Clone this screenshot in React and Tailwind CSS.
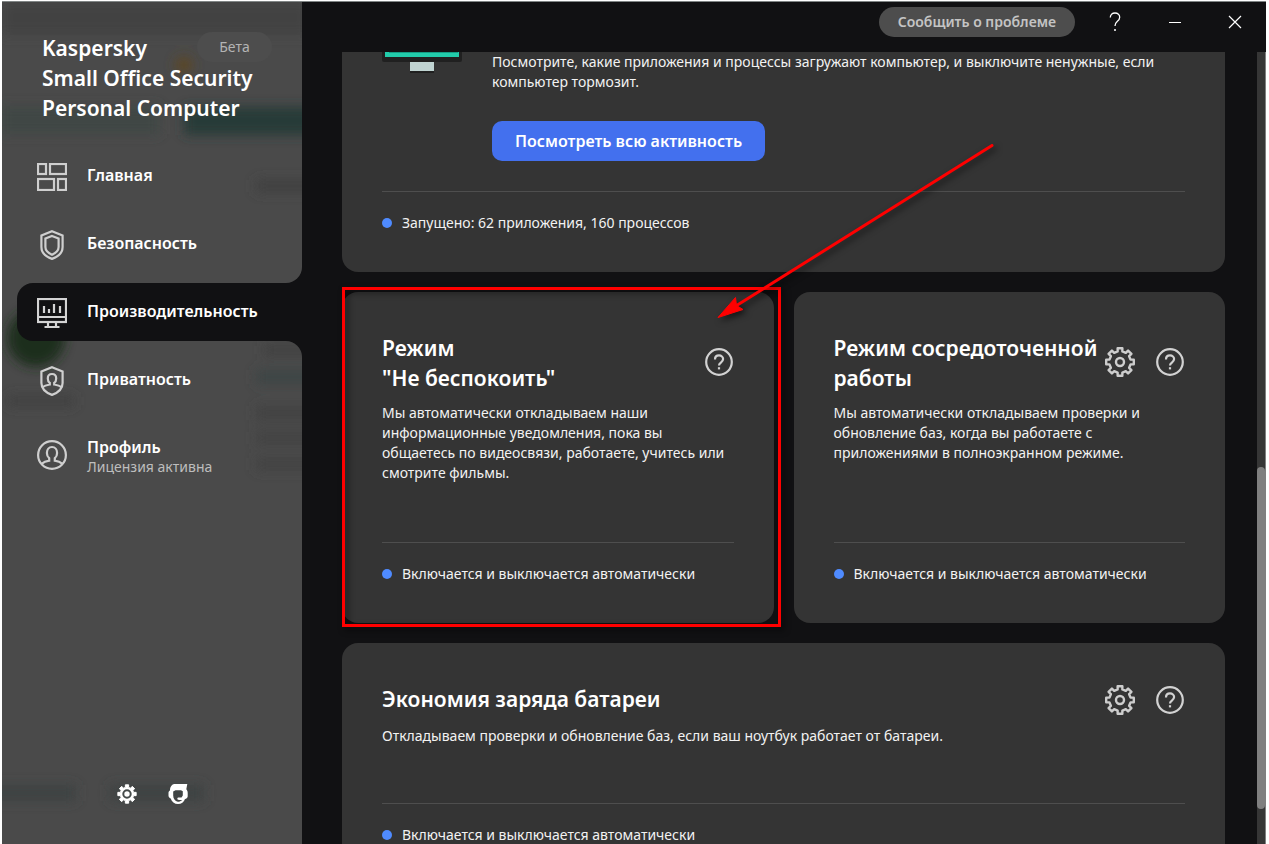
import React from "react";

function gearPath(c, outer, inner, teeth, topHalf, baseHalf) {
  const pts = [];
  for (let i = 0; i < teeth; i++) {
    const mid = (i * 2 * Math.PI) / teeth - Math.PI / 2;
    [
      [inner, -baseHalf],
      [outer, -topHalf],
      [outer, topHalf],
      [inner, baseHalf],
    ].forEach(([r, a]) => {
      pts.push(`${(c + r * Math.cos(mid + a)).toFixed(2)} ${(c + r * Math.sin(mid + a)).toFixed(2)}`);
    });
  }
  return `M${pts.join("L")}Z`;
}

const OUTLINE_GEAR = gearPath(16, 14, 10.8, 8, 0.17, 0.22);
const SOLID_GEAR = gearPath(10, 9.3, 6.8, 8, 0.18, 0.24);

function GearIcon() {
  return (
    <svg className="size-8" viewBox="0 0 32 32" fill="none" stroke="#cdcdcd" strokeWidth="2.4" strokeLinejoin="round" aria-hidden="true">
      <path d={OUTLINE_GEAR} />
      <circle cx="16" cy="16" r="4" />
    </svg>
  );
}

function HelpIcon() {
  return (
    <svg className="size-7" viewBox="0 0 28 28" fill="none" stroke="#d2d2d2" strokeWidth="2.2" aria-hidden="true">
      <circle cx="14" cy="14" r="12.8" />
      <path d="M10 11.400C10 9 11.700 7.400 14 7.400s4.100 1.600 4.100 3.700c0 1.700-1 2.600-2.200 3.500-1.200.9-1.900 1.500-1.900 3" />
      <path d="M14 19.200v2.200" />
    </svg>
  );
}

function HomeIcon() {
  return (
    <svg className="h-7 w-[30px]" viewBox="0 0 30 28" fill="none" stroke="#cfcfcf" strokeWidth="2.2" aria-hidden="true">
      <rect x="1" y="1" width="8" height="10" />
      <rect x="13" y="1" width="16" height="10" />
      <rect x="1" y="16" width="16" height="11" />
      <rect x="21" y="16" width="8" height="11" />
    </svg>
  );
}

function ShieldIcon() {
  return (
    <svg className="size-[30px]" viewBox="0 0 30 30" fill="none" stroke="#cfcfcf" strokeWidth="2.2" aria-hidden="true">
      <path d="M15 1.200 25.600 5.600V17c0 5.600-4.200 9.600-10.600 11.900C8.600 26.600 4.400 22.600 4.400 17V5.600Z" />
      <path d="M15 5.900 21.600 8.600V17c0 3.300-2.400 5.800-6.600 7.700-4.200-1.900-6.600-4.400-6.600-7.700V8.600Z" />
    </svg>
  );
}

function MonitorIcon() {
  return (
    <svg className="size-[30px]" viewBox="0 0 30 30" fill="none" stroke="#d4d4d4" strokeWidth="2.2" aria-hidden="true">
      <rect x="1" y="1" width="28" height="23" />
      <path d="M1 19h28M11 24v4M19 24v4M7.500 29h15" />
      <path d="M7 8v7M12 11v4M17 6v9M23 8v7" />
    </svg>
  );
}

function PrivacyIcon() {
  return (
    <svg className="size-[30px]" viewBox="0 0 30 30" fill="none" stroke="#cfcfcf" strokeWidth="2.2" aria-hidden="true">
      <path d="M15 1.200 25.600 5.600V17c0 5.600-4.200 9.600-10.600 11.900C8.600 26.600 4.400 22.600 4.400 17V5.600Z" />
      <path d="M5 21.300c2-1.400 4.500-2.300 7.800-2.800v-1.700c-1.300-1-2-2.600-2-4.400C10.800 9.800 12.500 8 15 8s4.200 1.800 4.200 4.400c0 1.800-.7 3.400-2 4.400v1.700c3.300.5 5.800 1.400 7.800 2.800" />
    </svg>
  );
}

function ProfileIcon() {
  return (
    <svg className="size-[30px]" viewBox="0 0 30 30" fill="none" stroke="#cfcfcf" strokeWidth="2.2" aria-hidden="true">
      <circle cx="15" cy="15" r="13.900" />
      <path d="M4.500 23.800c2.200-1.700 4.500-2.600 7.700-3.100v-2.500c-1.400-1.200-2.300-3.100-2.300-5.300C9.900 9.500 12 7 15 7s5.100 2.500 5.100 5.900c0 2.200-.9 4.100-2.300 5.300v2.500c3.200.5 5.500 1.400 7.700 3.100" />
    </svg>
  );
}

const NAV = [
  { label: "Главная", icon: HomeIcon },
  { label: "Безопасность", icon: ShieldIcon },
  { label: "Производительность", icon: MonitorIcon, active: true },
  { label: "Приватность", icon: PrivacyIcon },
  { label: "Профиль", icon: ProfileIcon, note: "Лицензия активна" },
];

function NavItem({ label, icon: Icon, active, note }) {
  return (
    <li className="relative">
      <a
        href="#"
        aria-current={active ? "page" : undefined}
        className={`flex items-center gap-5 pt-[2px] pl-5 ${note ? "h-[70px]" : "h-[58px]"} ${active ? "rounded-l-2xl bg-[#111113]" : ""}`}
      >
        <Icon />
        <span className={note ? "flex flex-col" : "flex flex-col pb-1"}>
          <span className="text-base leading-6 font-semibold text-white">{label}</span>
          {note && <span className="text-sm leading-4 text-[#bdbdbd]">{note}</span>}
        </span>
      </a>
      {active && (
        <>
          <span className="absolute right-0 bottom-full size-4 overflow-hidden">
            <span className="block size-4 rounded-br-2xl shadow-[0_0_0_16px_#111113]" />
          </span>
          <span className="absolute top-full right-0 size-4 overflow-hidden">
            <span className="block size-4 rounded-tr-2xl shadow-[0_0_0_16px_#111113]" />
          </span>
        </>
      )}
    </li>
  );
}

function Backdrop() {
  return (
    <svg className="absolute top-0 left-0 h-[844px] w-[300px]" viewBox="2 2 300 844" aria-hidden="true">
      <defs>
        <filter id="haze" x="-50%" y="-100%" width="200%" height="300%">
          <feGaussianBlur stdDeviation="6" />
        </filter>
      </defs>
      <g filter="url(#haze)">
        <rect x="0" y="0" width="310" height="35" fill="#434343" />
        <rect x="0" y="106" width="160" height="28" fill="#3f4644" />
        <rect x="184" y="107" width="130" height="28" fill="#253b37" />
        <circle cx="184" cy="65" r="9" fill="#5c4726" />
        <circle cx="36" cy="338" r="29" fill="#1c2f1c" />
        <rect x="256" y="180" width="60" height="12" fill="#3f3f3f" />
        <rect x="8" y="396" width="66" height="10" fill="#414141" />
        <rect x="264" y="345" width="50" height="10" fill="#414141" />
        <rect x="256" y="370" width="60" height="14" fill="#3d4544" />
        <rect x="256" y="406" width="60" height="14" fill="#424242" />
        <rect x="256" y="432" width="60" height="12" fill="#424242" />
        <rect x="256" y="458" width="60" height="12" fill="#424242" />
        <rect x="-10" y="785" width="86" height="16" fill="#3c4342" />
        <rect x="110" y="785" width="94" height="16" fill="#3c4342" />
      </g>
    </svg>
  );
}

function Sidebar() {
  return (
    <aside className="relative flex w-[300px] shrink-0 flex-col overflow-hidden bg-[#4a4a4a]">
      <Backdrop />
      <div className="relative flex items-start pt-[31px] pl-10">
        <h1 className="text-[21px] leading-[30px] font-semibold whitespace-nowrap text-white">
          Kaspersky
          <br />
          Small Office Security
          <br />
          Personal Computer
        </h1>
        <span className="absolute top-[30px] right-[30px] flex h-[30px] w-[75px] items-center justify-center rounded-full bg-[#4d4d4d] text-sm text-[#b4b4b4]">
          Бета
        </span>
      </div>
      <nav className="relative mt-6 pl-[15px]">
        <ul className="flex flex-col gap-[10px]">
          {NAV.map((item) => (
            <NavItem key={item.label} {...item} />
          ))}
        </ul>
      </nav>
      <div className="relative mt-auto flex items-center justify-center gap-[31px] pb-10">
        <button type="button" aria-label="Настройки">
          <svg className="size-5" viewBox="0 0 20 20" aria-hidden="true">
            <path d={SOLID_GEAR} fill="#fff" stroke="#fff" strokeWidth="1" strokeLinejoin="round" />
            <circle cx="10" cy="10" r="3.700" fill="none" stroke="#444a49" strokeWidth="2" />
          </svg>
        </button>
        <button type="button" aria-label="Поддержка">
          <svg className="size-5" viewBox="0 0 20 20" aria-hidden="true">
            <path
              fill="#fff"
              fillRule="evenodd"
              d="M6 0H19.300L18.300 5.300C19.200 6.300 19.700 7.400 19.700 9V12.200C19.700 13.600 18.500 14.600 17 15A7.500 7.500 0 0 1 10 20C6.500 20 3.700 18 2.700 14.500C1.300 14 .5 13 .5 11.800V9C.5 7.800 1 7 1.900 6.400C2 3 3.500.6 6 0ZM5.200 7.500V11.500C5.200 14.500 7 17.200 9.800 17.800C11.600 17.800 13 17.200 14.200 16H11C9.800 16 9.300 15.400 9.300 14.800C9.300 14 9.900 13.500 10.800 13.500H13.500L14.800 11.500V7.200L13 6.200H7.500Z"
            />
          </svg>
        </button>
      </div>
    </aside>
  );
}

function TitleBar() {
  return (
    <header className="flex h-[50px] shrink-0 items-start justify-end pt-[5px] pr-[21px]">
      <button type="button" className="h-[30px] rounded-full bg-[#4d4d4d] px-[19px] text-sm font-semibold text-[#c4c4c4]">
        Сообщить о проблеме
      </button>
      <div className="flex h-[30px] items-center gap-10 pl-[30px]">
        <button type="button" aria-label="Справка">
          <svg className="size-5" viewBox="0 0 20 20" fill="none" stroke="#fff" strokeWidth="1.300" aria-hidden="true">
            <path d="M5.300 5.500C5.300 2.800 7.200 1 10 1s4.700 1.700 4.700 4.300c0 2-1 3.100-2.500 4.300C10.600 10.900 10 11.900 10 14" />
            <circle cx="10" cy="18" r="1" fill="#fff" stroke="none" />
          </svg>
        </button>
        <button type="button" aria-label="Свернуть">
          <svg className="size-5" viewBox="0 0 20 20" stroke="#fff" aria-hidden="true">
            <path d="M4 10.500h12" />
          </svg>
        </button>
        <button type="button" aria-label="Закрыть">
          <svg className="size-5" viewBox="0 0 20 20" stroke="#fff" strokeWidth="1.200" aria-hidden="true">
            <path d="m4 4 12 12M16 4 4 16" />
          </svg>
        </button>
      </div>
    </header>
  );
}

function Status({ children }) {
  return (
    <div className="mt-auto">
      <hr className="border-[#4e4e4e]" />
      <p className="mt-[21px] flex items-center gap-[10px] text-sm leading-5 text-[#f2f2f2]">
        <span className="size-[10px] rounded-full bg-[#4f8bff]" />
        {children}
      </p>
    </div>
  );
}

function Card({ title, settings, className, children }) {
  return (
    <section className={`flex flex-col rounded-2xl bg-[#343434] px-10 pt-[41px] pb-[39px] ${className}`}>
      <div className="flex items-stretch justify-between">
        <h2 className="text-[21px] leading-[30px] font-semibold whitespace-nowrap text-white">{title}</h2>
        <div className="flex items-center gap-5 pr-px pb-[2px]">
          {settings && (
            <button type="button" aria-label="Параметры">
              <GearIcon />
            </button>
          )}
          <button type="button" aria-label="Подробнее">
            <HelpIcon />
          </button>
        </div>
      </div>
      {children}
    </section>
  );
}

function Annotation() {
  return (
    <>
      <div className="pointer-events-none absolute -top-[5px] -right-[7px] -bottom-1 left-0 border-3 border-[#ff0000] drop-shadow-[3px_3px_3px_rgba(0,0,0,0.6)]" />
      <svg
        className="pointer-events-none absolute -top-[152px] -right-[225px] h-[184px] w-[290px] drop-shadow-[3px_3px_3px_rgba(0,0,0,0.6)]"
        viewBox="710 140 290 184"
        aria-hidden="true"
      >
        <path d="M993 145.500 736 306.500" fill="none" stroke="#f00" strokeWidth="3" strokeLinecap="round" />
        <path d="M719 317.500 736.500 297.500 737.500 305.500 744 309.500Z" fill="#f00" stroke="#f00" strokeWidth="1" />
      </svg>
    </>
  );
}

export default function App() {
  return (
    <div className="h-screen overflow-hidden bg-white pt-px pr-[3px] pl-[2px] font-['Noto_Sans','Open_Sans',sans-serif]">
      <div className="flex h-full border-t border-[#808585] bg-[#111113]">
        <Sidebar />
        <div className="flex min-w-0 flex-1 flex-col">
          <TitleBar />
          <div className="flex min-h-0 flex-1">
            <main className="flex min-w-0 flex-1 flex-col gap-5 overflow-hidden pr-8 pl-10">
              <section className="shrink-0 rounded-b-2xl bg-[#343434] px-10 pb-[39px]">
                <div className="flex gap-[30px]">
                  <svg className="h-6 w-20 shrink-0" viewBox="0 0 80 24" aria-hidden="true">
                    <path d="M0 0h80v8a2 2 0 0 1-2 2H2a2 2 0 0 1-2-2Z" fill="#202020" />
                    <path d="M3 0h74v5H3Z" fill="#22ccab" />
                    <path d="M7 0h69v1H7Z" fill="#159c84" />
                    <path d="M28 10h24v9H28Z" fill="#c0d4d2" />
                    <path d="M28 19h24v2H28Z" fill="#202020" />
                  </svg>
                  <div className="pb-[30px]">
                    <p className="text-sm leading-5 text-[#f2f2f2]">
                      Посмотрите, какие приложения и процессы загружают компьютер, и выключите ненужные, если компьютер тормозит.
                    </p>
                    <button type="button" className="mt-[29px] h-10 rounded-[10px] bg-[#4370ee] px-[23px] text-base font-semibold text-white">
                      Посмотреть всю активность
                    </button>
                  </div>
                </div>
                <Status>Запущено: 62 приложения, 160 процессов</Status>
              </section>

              <div className="grid shrink-0 grid-cols-2 gap-5">
                <div className="relative flex">
                  <Card
                    className="min-h-[331px] flex-1"
                    title={
                      <>
                        Режим
                        <br />
                        "Не беспокоить"
                      </>
                    }
                  >
                    <p className="mt-[10px] text-sm leading-5 text-[#f2f2f2]">
                      Мы автоматически откладываем наши информационные уведомления, пока вы общаетесь по видеосвязи, работаете, учитесь или смотрите фильмы.
                    </p>
                    <Status>Включается и выключается автоматически</Status>
                  </Card>
                  <Annotation />
                </div>
                <Card
                  className="min-h-[331px] min-w-0"
                  settings
                  title={
                    <>
                      Режим сосредоточенной
                      <br />
                      работы
                    </>
                  }
                >
                  <p className="mt-[10px] text-sm leading-5 text-[#f2f2f2]">
                    Мы автоматически откладываем проверки и обновление баз, когда вы работаете с приложениями в полноэкранном режиме.
                  </p>
                  <Status>Включается и выключается автоматически</Status>
                </Card>
              </div>

              <Card className="min-h-[241px] shrink-0" settings title="Экономия заряда батареи">
                <p className="mt-2 text-sm leading-5 text-[#f2f2f2]">
                  Откладываем проверки и обновление баз, если ваш ноутбук работает от батареи.
                </p>
                <Status>Включается и выключается автоматически</Status>
              </Card>
            </main>
            <div className="flex w-[9px] flex-col border-r border-[#808080] bg-[#363636]" aria-hidden="true">
              <div className="grow-[415]" />
              <div className="grow-[342] rounded-full bg-[#808080]" />
              <div className="grow-[35]" />
            </div>
          </div>
        </div>
      </div>
    </div>
  );
}
